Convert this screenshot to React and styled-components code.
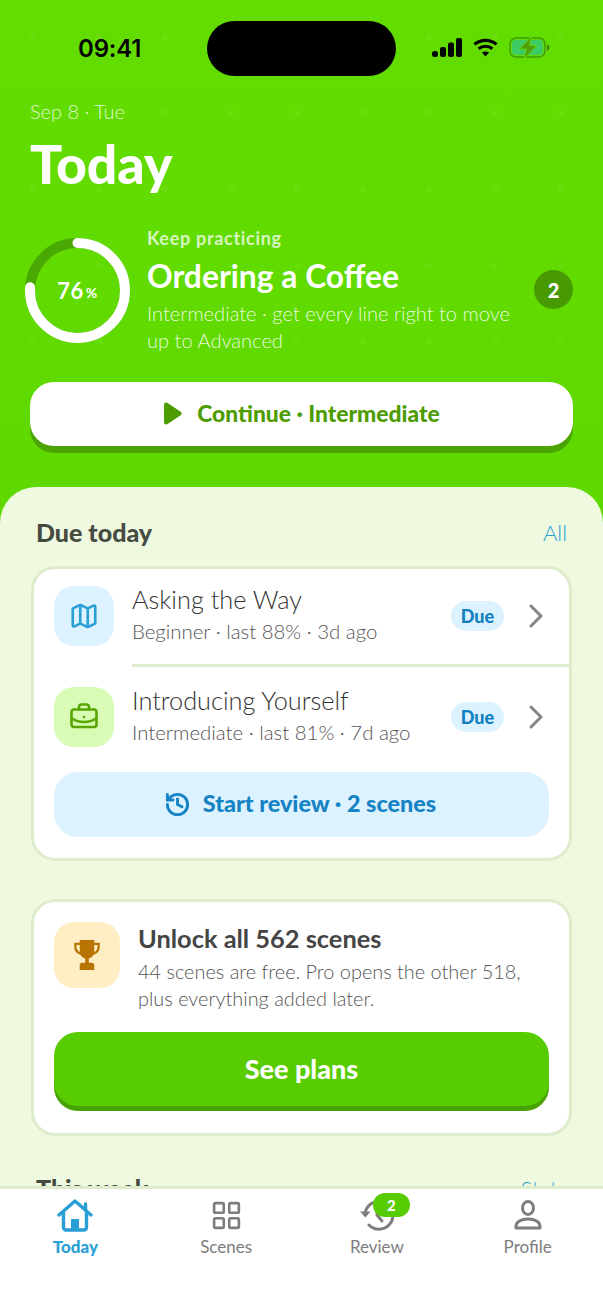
import React from "react";
import styled, { createGlobalStyle } from "styled-components";
import { Map, BriefcaseBusiness, History, ChevronRight, LayoutGrid } from "lucide-react";

const FONT = `"Lato", "Noto Sans", sans-serif`;

const GlobalStyle = createGlobalStyle`
  html, body { margin: 0; padding: 0; background: #fff; }
  * { box-sizing: border-box; }
  body { font-family: ${FONT}; -webkit-font-smoothing: antialiased; }
`;

const Screen = styled.div`
  position: relative;
  width: 603px;
  height: 1311px;
  display: flex;
  flex-direction: column;
  overflow: hidden;
  background: #fff;
`;

const Scroll = styled.main`
  flex: 1;
  min-height: 0;
  overflow: hidden;
  background-color: #5cd400;
  background-image:
    radial-gradient(circle, rgba(255, 255, 255, 0.045) 3px, transparent 3.5px),
    linear-gradient(180deg, #63dd00 0%, #5ad200 100%);
  background-size: 66px 76px, 100% 100%;
  background-position: 0px -1px, 0 0;
`;

const Hero = styled.header`
  padding: 0 30px 41px;
`;

const StatusBar = styled.div`
  height: 96px;
  margin: 0 -30px;
  padding: 0 53px 0 78px;
  display: flex;
  align-items: center;
  justify-content: space-between;
`;

const Clock = styled.span`
  font-family: "Inter", sans-serif;
  font-size: 24px;
  font-weight: 600;
  color: #050505;
  letter-spacing: -0.2px;
`;

const Island = styled.div`
  position: absolute;
  top: 21px;
  left: 207px;
  width: 189px;
  height: 55px;
  border-radius: 28px;
  background: #000;
`;

const StatusIcons = styled.div`
  display: flex;
  align-items: center;
  gap: 11px;
  margin-top: -2px;
`;

const DateLine = styled.div`
  margin-top: 3px;
  font-size: 20px;
  line-height: 24px;
  font-weight: 300;
  color: rgba(255, 255, 255, 0.8);
`;

const Title = styled.h1`
  margin: 12px 0 0;
  font-size: 53.5px;
  line-height: 56px;
  font-weight: 900;
  color: #fff;
`;

const Progress = styled.section`
  margin: 36px 0 0 -5px;
  display: flex;
  align-items: center;
`;

const Ring = styled.div`
  position: relative;
  flex: none;
  width: 105px;
  height: 105px;
  margin-right: 17px;
  display: flex;
  align-items: center;
  justify-content: center;
  color: #fff;
  font-weight: 700;
  font-size: 22px;
  letter-spacing: 0.5px;

  svg {
    position: absolute;
    inset: 0;
  }
  small {
    font-size: 14px;
    margin-left: 2px;
    margin-top: 4px;
  }
`;

const ProgressText = styled.div`
  flex: 1;
  min-width: 0;
`;

const Eyebrow = styled.div`
  font-size: 18px;
  line-height: 22px;
  font-weight: 700;
  letter-spacing: 0.7px;
  color: rgba(255, 255, 255, 0.75);
`;

const SceneName = styled.div`
  margin-top: 8px;
  font-size: 31.8px;
  line-height: 38px;
  font-weight: 700;
  color: #fff;
`;

const SceneDesc = styled.div`
  margin-top: 5px;
  font-size: 20.1px;
  line-height: 27px;
  font-weight: 300;
  color: rgba(255, 255, 255, 0.88);
`;

const CountBadge = styled.div`
  flex: none;
  width: 39px;
  height: 39px;
  margin-left: 12px;
  margin-top: -2px;
  border-radius: 50%;
  background: #479a02;
  color: #fff;
  display: flex;
  align-items: center;
  justify-content: center;
  font-size: 20px;
  font-weight: 900;
`;

const ContinueButton = styled.button`
  width: 100%;
  height: 64px;
  margin-top: 28px;
  border: 0;
  border-radius: 24px;
  background: #fff;
  box-shadow: 0 7px 0 #4aa502;
  color: #4d9c02;
  font-family: inherit;
  font-size: 22.8px;
  font-weight: 900;
  display: flex;
  align-items: center;
  justify-content: center;
  gap: 15px;
  padding: 0 0 2px 1px;
`;

const Sheet = styled.div`
  height: 800px;
  padding: 30px 31px 0;
  background: #eef9e0;
  border-radius: 36px 36px 0 0;
`;

const SectionHead = styled.div`
  display: flex;
  align-items: center;
  justify-content: space-between;
  padding: 0 5px;
  height: 30px;
`;

const SectionTitle = styled.h2`
  margin: 0;
  font-size: 25px;
  line-height: 30px;
  font-weight: 900;
  color: #454b40;
`;

const SectionLink = styled.a`
  font-size: 22px;
  font-weight: 300;
  color: #2a9fd6;
`;

const Card = styled.section`
  margin-top: ${(p) => p.$top}px;
  background: #fff;
  border: 3px solid #dfeccc;
  border-radius: 24px;
`;

const SceneRow = styled.div`
  display: flex;
  align-items: center;
  padding: ${(p) => p.$top}px 13px ${(p) => p.$bottom}px 20px;
`;

const IconTile = styled.div`
  flex: none;
  width: ${(p) => p.$size}px;
  height: ${(p) => p.$size}px;
  border-radius: 20px;
  background: ${(p) => p.$bg};
  color: ${(p) => p.$fg};
  display: flex;
  align-items: center;
  justify-content: center;
`;

const RowText = styled.div`
  flex: 1;
  min-width: 0;
  margin-left: 18px;
  margin-top: -5px;
`;

const RowTitle = styled.div`
  font-size: 25.3px;
  line-height: 32px;
  font-weight: 300;
  color: #333;
`;

const RowSub = styled.div`
  font-size: 20.4px;
  line-height: 26px;
  margin-top: 3px;
  font-weight: 300;
  color: #555;
`;

const DuePill = styled.span`
  flex: none;
  width: 53px;
  height: 30px;
  border-radius: 15px;
  background: #dcf2ff;
  color: #1080c0;
  font-size: 18px;
  font-weight: 900;
  display: flex;
  align-items: center;
  justify-content: center;
`;

const Chevron = styled(ChevronRight)`
  flex: none;
  margin-left: 12px;
  color: #858585;
`;

const Divider = styled.div`
  height: 3px;
  margin-left: 98px;
  background: #dfeccc;
`;

const ReviewButton = styled.button`
  display: flex;
  align-items: center;
  justify-content: center;
  gap: 12px;
  width: calc(100% - 40px);
  height: 65px;
  margin: 0 20px 21px;
  padding: 0 3px 3px 0;
  border: 0;
  border-radius: 24px;
  background: #dcf2ff;
  color: #1583c4;
  font-family: inherit;
  font-size: 23.4px;
  font-weight: 900;

  svg {
    margin-top: 3px;
  }
`;

const UpsellBody = styled.div`
  padding: 20px 20px 22px;
`;

const UpsellTop = styled.div`
  display: flex;
  gap: 18px;
`;

const UpsellTitle = styled.div`
  margin-top: 1px;
  font-size: 25.4px;
  line-height: 30px;
  font-weight: 700;
  color: #454545;
`;

const UpsellDesc = styled.div`
  margin-top: 5px;
  font-size: 19.9px;
  line-height: 27px;
  font-weight: 300;
  color: #555;
`;

const PlansButton = styled.button`
  display: block;
  width: 100%;
  height: 74px;
  margin: 20px 0 5px;
  padding: 0 0 2px;
  border: 0;
  border-radius: 24px;
  background: #58cc02;
  box-shadow: 0 5px 0 #46a302;
  color: #fff;
  font-family: inherit;
  font-size: 27px;
  font-weight: 900;
`;

const NextHead = styled(SectionHead)`
  margin-top: 37px;
`;

const TabBar = styled.nav`
  flex: none;
  height: 125px;
  display: grid;
  grid-template-columns: repeat(4, 1fr);
  align-items: start;
  padding-top: 8px;
  background: #fff;
  border-top: 3px solid #dfeccc;
`;

const Tab = styled.a`
  display: flex;
  flex-direction: column;
  align-items: center;
  color: ${(p) => (p.$active ? "#2a9fd6" : "#7d7d7d")};
  font-size: 17px;
  line-height: 22px;
  font-weight: ${(p) => (p.$active ? 900 : 400)};
`;

const TabIcon = styled.div`
  position: relative;
  width: 36px;
  height: 36px;
  margin-bottom: 3px;
  display: flex;
  align-items: center;
  justify-content: center;
`;

const TabBadge = styled.span`
  position: absolute;
  top: -4px;
  left: 14px;
  width: 37px;
  height: 24px;
  border-radius: 12px;
  background: #58cc02;
  color: #fff;
  font-size: 15px;
  line-height: 24px;
  font-weight: 900;
  text-align: center;
`;

const SignalIcon = () => (
  <svg width="30" height="19" viewBox="0 0 30 19" fill="#050505">
    <rect x="0" y="13" width="6" height="6" rx="2.5" />
    <rect x="8" y="9" width="6" height="10" rx="2" />
    <rect x="16" y="4.5" width="6" height="14.5" rx="2" />
    <rect x="24" y="0" width="6" height="19" rx="2" />
  </svg>
);

const WifiIcon = () => (
  <svg width="25" height="19" viewBox="0 0 25 19" fill="none" stroke="#050505" strokeWidth="3.2">
    <path d="M1.5 6.4C7.6 .9 17.4 .9 23.5 6.4" />
    <path d="M5.6 10.8c3.9-3.4 9.9-3.4 13.8 0" />
    <path d="M12.5 18.5 8.9 14.6c2-1.6 5.2-1.6 7.2 0Z" fill="#050505" stroke="none" />
  </svg>
);

const BatteryIcon = () => (
  <svg width="41" height="23" viewBox="0 0 41 23">
    <rect x="1" y="2" width="35" height="19" rx="6" fill="none" stroke="#3e9c0c" strokeWidth="1.5" />
    <rect x="3" y="4" width="31" height="15" rx="4" fill="#3ecb63" />
    <path d="M38 8.500c1.700.5 2.500 1.600 2.500 3s-.8 2.500-2.500 3Z" fill="#3e7c0c" />
    <path d="M23 0 10.500 13h7l-2.500 10L27.500 9.500h-7Z" fill="#4f9e0a" stroke="#5cd400" strokeWidth="1" />
  </svg>
);

const ProgressRing = ({ value }) => {
  const r = 47.5;
  const c = 2 * Math.PI * r;
  return (
    <svg width="105" height="105" viewBox="0 0 105 105" fill="none" strokeWidth="10">
      <circle cx="52.5" cy="52.5" r={r} stroke="#4aa803" />
      <circle
        cx="52.5"
        cy="52.5"
        r={r}
        stroke="#fff"
        strokeLinecap="round"
        strokeDasharray={`${c * value} ${c}`}
        transform="rotate(-90 52.5 52.5)"
      />
    </svg>
  );
};

const PlayIcon = () => (
  <svg width="18" height="23" viewBox="0 0 19 23" fill="#4d9c02">
    <path d="M0 2C0 .4 1.600-.4 3-.1L18 10c.9.7.9 2.300 0 3L3 23c-1.400.4-3-.4-3-2Z" />
  </svg>
);

const TrophyIcon = () => (
  <svg width="26" height="31" viewBox="0 0 28 34" fill="#b87403">
    <path d="M6 0h16v3h6v4.500c0 4.600-3 8-6.700 8.600-1.300 2.200-3.200 3.600-5.300 4.100V25h3.500c1.400 0 2.500 1.100 2.500 2.500V33H6v-5.500C6 26.100 7.100 25 8.500 25H12v-4.800c-2.100-.5-4-1.900-5.300-4.100C3 15.500 0 12.100 0 7.500V3h6ZM2.500 5.500v2c0 2.700 1.500 4.900 3.600 5.800-.1-.7-.1-1.400-.1-2.100V5.500ZM22 5.500v5.700c0 .7 0 1.400-.1 2.100 2.100-.9 3.600-3.100 3.600-5.800v-2Z" />
  </svg>
);

const HomeIcon = () => (
  <svg width="36" height="33" viewBox="0 0 36 33" fill="none" stroke="#2a9fd6" strokeWidth="3.4" strokeLinecap="round" strokeLinejoin="round">
    <path d="M2 16 18 2l16 14" />
    <path d="M28.500 5v6" />
    <path d="M6.500 14v14.500a2.500 2.500 0 0 0 2.500 2.500h18a2.500 2.500 0 0 0 2.500-2.500V14" />
    <rect x="14" y="20" width="8" height="11" fill="#2a9fd6" stroke="none" />
  </svg>
);

const ReviewIcon = () => (
  <svg width="34" height="34" viewBox="0 0 34 34" fill="none" stroke="#7d7d7d" strokeWidth="3" strokeLinecap="round">
    <path d="M5 17A14 14 0 1 1 9 27" />
    <path d="M0 13.500 5.500 19.500 10.500 13.500Z" fill="#7d7d7d" stroke="none" />
    <path d="M17 10v7l5 6" />
  </svg>
);

const ProfileIcon = () => (
  <svg width="28" height="30" viewBox="0 0 28 30" fill="none" stroke="#7d7d7d" strokeWidth="3" strokeLinejoin="round">
    <ellipse cx="14" cy="8" rx="5.500" ry="6.500" />
    <path d="M2 28v-1.500C2 22 7 19 14 19s12 3 12 7.500V28Z" />
  </svg>
);

const rows = [
  { title: "Asking the Way", sub: "Beginner · last 88% · 3d ago", top: 17, bottom: 18, bg: "#dcf2ff", fg: "#2a9fd6", Icon: Map },
  { title: "Introducing Yourself", sub: "Intermediate · last 81% · 7d ago", top: 20, bottom: 25, bg: "#d8fcb6", fg: "#58a700", Icon: BriefcaseBusiness },
];

const tabs = [
  { label: "Scenes", icon: <LayoutGrid size={33} strokeWidth={1.9} /> },
  { label: "Review", icon: <ReviewIcon />, badge: 2 },
  { label: "Profile", icon: <ProfileIcon /> },
];

export default function App() {
  return (
    <Screen>
      <GlobalStyle />
      <Scroll>
        <Hero>
          <StatusBar>
            <Clock>09:41</Clock>
            <Island />
            <StatusIcons>
              <SignalIcon />
              <WifiIcon />
              <BatteryIcon />
            </StatusIcons>
          </StatusBar>
          <DateLine>Sep 8 · Tue</DateLine>
          <Title>Today</Title>
          <Progress>
            <Ring>
              <ProgressRing value={0.76} />
              76<small>%</small>
            </Ring>
            <ProgressText>
              <Eyebrow>Keep practicing</Eyebrow>
              <SceneName>Ordering a Coffee</SceneName>
              <SceneDesc>Intermediate · get every line right to move up to Advanced</SceneDesc>
            </ProgressText>
            <CountBadge>2</CountBadge>
          </Progress>
          <ContinueButton>
            <PlayIcon />
            Continue · Intermediate
          </ContinueButton>
        </Hero>
        <Sheet>
          <SectionHead>
            <SectionTitle>Due today</SectionTitle>
            <SectionLink>All</SectionLink>
          </SectionHead>
          <Card $top={19}>
            {rows.map((row, i) => (
              <React.Fragment key={row.title}>
                {i > 0 && <Divider />}
                <SceneRow $top={row.top} $bottom={row.bottom}>
                  <IconTile $size={60} $bg={row.bg} $fg={row.fg}>
                    <row.Icon size={30} strokeWidth={2.1} />
                  </IconTile>
                  <RowText>
                    <RowTitle>{row.title}</RowTitle>
                    <RowSub>{row.sub}</RowSub>
                  </RowText>
                  <DuePill>Due</DuePill>
                  <Chevron size={40} strokeWidth={1.8} />
                </SceneRow>
              </React.Fragment>
            ))}
            <ReviewButton>
              <History size={27} strokeWidth={2.6} />
              Start review · 2 scenes
            </ReviewButton>
          </Card>
          <Card $top={38}>
            <UpsellBody>
              <UpsellTop>
                <IconTile $size={66} $bg="#ffeec4" $fg="#b87403">
                  <TrophyIcon />
                </IconTile>
                <div>
                  <UpsellTitle>Unlock all 562 scenes</UpsellTitle>
                  <UpsellDesc>
                    44 scenes are free. Pro opens the other 518,
                    <br />
                    plus everything added later.
                  </UpsellDesc>
                </div>
              </UpsellTop>
              <PlansButton>See plans</PlansButton>
            </UpsellBody>
          </Card>
          <NextHead>
            <SectionTitle>This week</SectionTitle>
            <SectionLink>Stats</SectionLink>
          </NextHead>
        </Sheet>
      </Scroll>
      <TabBar>
        <Tab $active>
          <TabIcon>
            <HomeIcon />
          </TabIcon>
          Today
        </Tab>
        {tabs.map((tab) => (
          <Tab key={tab.label}>
            <TabIcon>
              {tab.icon}
              {tab.badge && <TabBadge>{tab.badge}</TabBadge>}
            </TabIcon>
            {tab.label}
          </Tab>
        ))}
      </TabBar>
    </Screen>
  );
}
